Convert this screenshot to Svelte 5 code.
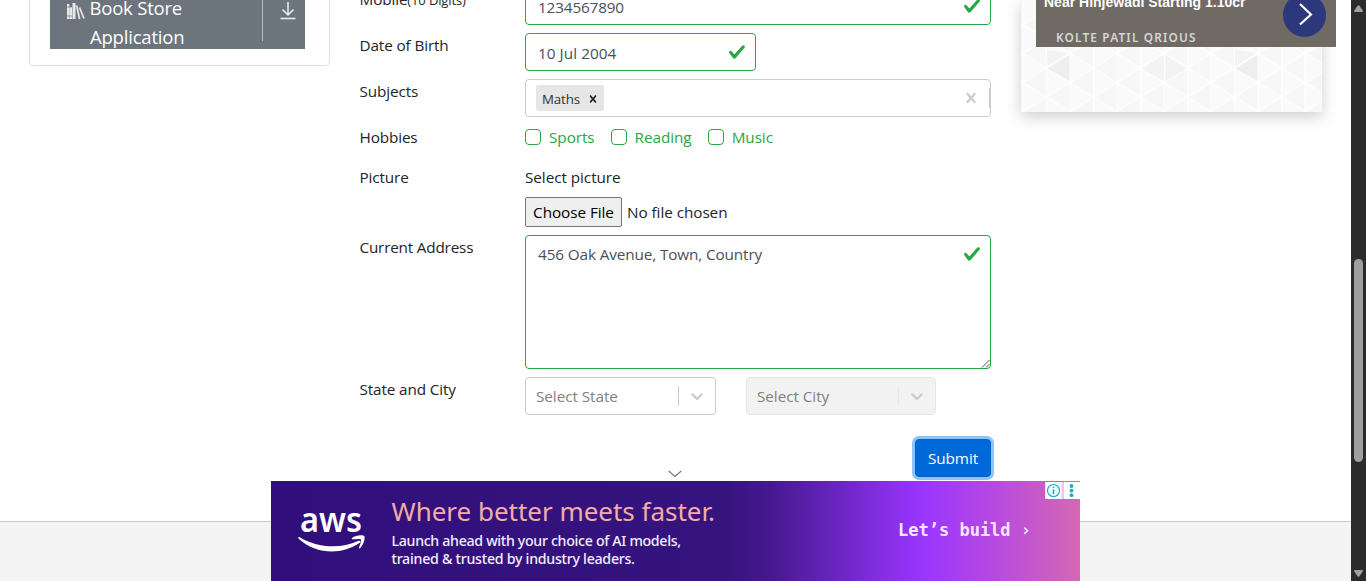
<script>
  const hobbies = ['Sports', 'Reading', 'Music'];
</script>

{#snippet check()}
  <svg class="check" viewBox="0 0 8 8" width="18" height="18"><path fill="#28a745" d="M2.3 6.73.6 4.53c-.4-1.04.46-1.4 1.1-.8l1.1 1.4 3.4-3.8c.6-.63 1.6-.27 1.2.7l-4 4.6c-.43.5-.8.4-1.1.1z" /></svg>
{/snippet}

{#snippet chevron()}
  <svg width="20" height="20" viewBox="0 0 20 20"><path fill="#ccc" d="M4.516 7.548c0.436-0.446 1.043-0.481 1.576 0l3.908 3.747 3.908-3.747c0.533-0.481 1.141-0.446 1.574 0 0.436 0.445 0.408 1.197 0 1.615-0.406 0.418-4.695 4.502-4.695 4.502-0.217 0.223-0.502 0.335-0.787 0.335s-0.57-0.112-0.789-0.335c0 0-4.287-4.084-4.695-4.502s-0.436-1.17 0-1.615z" /></svg>
{/snippet}

{#snippet cross(size, color)}
  <svg width={size} height={size} viewBox="0 0 20 20"><path fill={color} d="M14.348 14.849c-0.469 0.469-1.229 0.469-1.697 0l-2.651-3.030-2.651 3.029c-0.469 0.469-1.229 0.469-1.697 0-0.469-0.469-0.469-1.229 0-1.697l2.758-3.15-2.759-3.152c-0.469-0.469-0.469-1.228 0-1.697s1.228-0.469 1.697 0l2.652 3.031 2.651-3.031c0.469-0.469 1.228-0.469 1.697 0s0.469 1.229 0 1.697l-2.758 3.152 2.758 3.15c0.469 0.469 0.469 1.229 0 1.698z" /></svg>
{/snippet}

<div class="window">
  <div class="page">
    <main>
      <aside class="side">
        <div class="menu">
          <svg class="books" width="19" height="17" viewBox="0 0 19 17">
            <path fill="#e6e8ea" d="M1 1h2.300v15H1zM3.600 4h2.400v12H3.600zM6.500 0h3v16h-3z" />
            <path stroke="#e6e8ea" stroke-width="1.700" d="M10.600 2.500l3 13.500M13.500 4.500l4.500 11" />
            <path stroke="#6c757d" stroke-width=".7" d="M1 4h5M1 13h5" />
          </svg>
          <span class="menu-text">Book Store<br />Application</span>
          <span class="rule"></span>
          <svg class="down" width="16" height="18" viewBox="0 0 16 18"><path d="M8 0v12.500M2.500 7.500 8 13l5.500-5.500M.5 16.500h15" fill="none" stroke="#eceeef" stroke-width="1.500" /></svg>
        </div>
      </aside>

      <form>
        <div class="row"><span class="label">Mobile<small>(10 Digits)</small></span><div class="input grow"><span class="digits">1234567890</span>{@render check()}</div></div>
        <div class="row"><span class="label">Date of Birth</span><div class="input date"><span class="dob">10 Jul 2004</span>{@render check()}</div></div>
        <div class="row">
          <span class="label">Subjects</span>
          <div class="select grow">
            <span class="tag">Maths {@render cross(14, '#222')}</span>
            <span class="clear">{@render cross(20, '#ccc')}</span>
            <i class="sep"></i>
          </div>
        </div>
        <div class="row hobbies">
          <span class="label">Hobbies</span>
          {#each hobbies as hobby}
            <span class="option"><i></i><span>{hobby}</span></span>
          {/each}
        </div>
        <div class="row">
          <span class="label">Picture</span>
          <div class="file">
            <span>Select picture</span>
            <div class="chooser"><span class="choose">Choose File</span><span>No file chosen</span></div>
          </div>
        </div>
        <div class="row">
          <span class="label address">Current Address</span>
          <div class="input area grow">
            <span class="street">456 Oak Avenue, Town, Country</span>{@render check()}
            <svg class="grip" width="9" height="9" viewBox="0 0 9 9"><path d="M1 8.500 8.500 1M5 8.500 8.500 5" stroke="#555" stroke-width="1" /></svg>
          </div>
        </div>
        <div class="row">
          <span class="label">State and City</span>
          <div class="select state"><span class="ph">Select State</span><i class="sep"></i><span class="chev">{@render chevron()}</span></div>
          <div class="select city"><span class="ph">Select City</span><i class="sep"></i><span class="chev">{@render chevron()}</span></div>
        </div>
        <div class="actions"><span class="submit">Submit</span></div>
      </form>

      <aside class="promo">
        <svg class="mesh" width="301" height="112" viewBox="0 0 301 112">
          <defs>
            <pattern id="tri" width="47" height="29" patternUnits="userSpaceOnUse" x="2" y="-4.500">
              <path fill="#fafafa" d="M0 0h47v29H0z" />
              <path fill="#f7f7f7" d="M0 0 23.500 14.500V-14.500zM23.500 14.500 47 0v29zM0 29l23.500-14.500v29z" />
              <path stroke="#fff" stroke-width="1.200" fill="none" d="M0 0v29M23.500 0v29M47 0v29M0 0l47 29M47 0 0 29" />
            </pattern>
          </defs>
          <rect width="301" height="112" fill="url(#tri)" />
          <path fill="#eee" d="M26.500 68.500 48.500 55v26zM214.500 68.500 236.500 55v26z" />
          <path fill="#f3f3f3" d="M120.500 68.500 143 55v26zM144.500 55v26l21-12.500zM26 50v16l21-13zM214 50v16l21-13z" />
        </svg>
        <div class="card">
          <b>Near Hinjewadi Starting 1.10cr</b>
          <span>KOLTE PATIL QRIOUS</span>
          <div class="go"><svg width="16" height="24" viewBox="0 0 16 24"><path d="M2 2l11 10.500L2 22.500" fill="none" stroke="#fff" stroke-width="2.200" /></svg></div>
        </div>
      </aside>
    </main>
    <footer></footer>
    <svg class="collapse" width="14" height="8" viewBox="0 0 14 8"><path d="M.7 1 7 6.500 13.300 1" fill="none" stroke="#777" stroke-width="1.200" /></svg>
    <section class="banner">
      <svg class="aws" width="68" height="45" viewBox="0 0 68 45">
        <text x="2" y="25" textLength="62" lengthAdjust="spacingAndGlyphs">aws</text>
        <path fill="#fff" d="M1.300 30C18 40.500 42 42.500 60 34c2-1 3.300.5 1.800 1.800C43 49 17 47 .5 31.500c-.7-.7 0-2 .8-1.500z" />
        <path fill="#fff" d="M54 31c3-3 11-3.500 12.200-2 1.300 1.600-.2 8.500-4 12-.8.7-1.500.4-1.200-.5 1-2.500 2.600-6.800 1.800-7.900-.9-1.100-5.300-.6-7.900-.3-.9.100-1.500-.6-.9-1.300z" />
      </svg>
      <div class="copy">
        <h2>Where better meets faster.</h2>
        <p class="one">Launch ahead with your choice of AI models,</p>
        <p class="two">trained &amp; trusted by industry leaders.</p>
      </div>
      <span class="cta">Let’s build ›</span>
      <div class="choices">
        <svg width="17" height="17" viewBox="0 0 16 17"><path fill="#fff" d="M0 0h16v17H0z" /><circle cx="8" cy="8.500" r="6" fill="none" stroke="#13afc9" stroke-width="1.200" /><path stroke="#13afc9" stroke-width="1.600" d="M8 4.500v1.600M8 7.300v5" /></svg>
        <svg width="16" height="17" viewBox="0 0 16 17"><path fill="#fff" d="M0 0h16v17H0z" /><g fill="#13afc9"><circle cx="7.500" cy="4" r="1.900" /><circle cx="7.500" cy="8.600" r="1.900" /><circle cx="7.500" cy="13.200" r="1.900" /></g></svg>
      </div>
    </section>
  </div>
  <div class="scrollbar">
    <svg width="9" height="7" viewBox="0 0 9 7"><path d="M3.500.8q1-1.200 2 0L9 6q0 1-1 1H1q-1 0-1-1z" fill="#9f9f9f" /></svg>
    <i></i>
    <svg width="9" height="7" viewBox="0 0 9 7"><path d="M3.500 6.200q1 1.200 2 0L9 1q0-1-1-1H1Q0 0 0 1z" fill="#9f9f9f" /></svg>
  </div>
</div>

<style>
  :global(body) { margin: 0; overflow: hidden; }
  .window { display: flex; height: 581px; overflow: hidden; background: #fff; color: #212529; font: 15.300px/24px "Open Sans", "Noto Sans", sans-serif; letter-spacing: -.06px; white-space: nowrap; }
  .window * { box-sizing: border-box; }
  svg { display: block; flex: none; }
  .page { position: relative; width: 1351px; height: 581px; overflow: hidden; }
  main { display: flex; height: 521px; align-items: flex-start; }
  footer { height: 60px; border-top: 1px solid #cbcbcb; background: #f4f4f4; }
  .side { width: 301px; height: 66px; margin-left: 29px; padding: 0 24px 0 20px; border: 1px solid #dfdfdf; border-top: 0; border-radius: 0 0 5px 5px; }
  .menu { display: flex; height: 49px; padding-left: 16px; background: #6c757d; color: #fff; }
  .books { margin-top: 3px; }
  .menu-text { width: 172px; margin: -7px 0 0 5px; font-size: 18.500px; line-height: 29px; letter-spacing: -.2px; text-indent: -.5px; }
  .rule { width: 1px; height: 41px; background: #b5babe; }
  .down { margin: 2px 0 0 16.500px; }
  form { width: 631.500px; margin: -13px 0 0 29.500px; display: flex; flex-direction: column; gap: 8px; }
  .row { display: flex; align-items: flex-start; }
  .label { flex: none; width: 165.500px; padding-top: 1px; line-height: 23px; letter-spacing: -.13px; }
  .address { letter-spacing: -.2px; }
  small { font-size: 13px; }
  .grow { flex: 1; }
  .input { display: flex; align-items: flex-start; justify-content: space-between; height: 38px; padding: 7px 9px 0 12px; border: 1px solid #28a745; border-radius: 4px; color: #495057; }
  .digits { letter-spacing: -.15px; }
  .dob { letter-spacing: .05px; }
  .check { margin-top: 2px; }
  .date { width: 231px; }
  .area { position: relative; height: 134px; padding-top: 6px; }
  .area .check { margin-top: 3px; }
  .street { letter-spacing: -.12px; }
  .grip { position: absolute; right: 0; bottom: 0; }
  .select { display: flex; align-items: center; height: 38px; padding-left: 10px; border: 1px solid #ccc; border-radius: 4px; color: #808080; }
  .sep { width: 1px; height: 20px; background: #ccc; }
  .tag { display: flex; align-items: center; gap: 6px; width: 68px; height: 26px; padding: 1px 4px 0 6px; border-radius: 2px; background: #e6e6e6; color: #333; font-size: 13.300px; letter-spacing: -.15px; }
  .clear { margin: 0 8px 0 auto; }
  .hobbies { height: 32px; color: #28a745; }
  .hobbies .label { color: #212529; }
  .option { display: flex; gap: 8px; margin-right: 16px; }
  .option i { width: 16px; height: 16px; margin-top: 4px; border: 1px solid #28a745; border-radius: 4px; }
  .file { display: flex; flex-direction: column; gap: 8px; }
  .chooser { display: flex; align-items: center; gap: 5px; height: 30px; }
  .choose { width: 97px; height: 30px; border: 1px solid #767676; border-radius: 2px; background: #efefef; color: #000; line-height: 29px; text-align: center; }
  .state { width: 191px; }
  .city { width: 190px; margin-left: 30px; border-color: #e6e6e6; background: #f2f2f2; }
  .city .sep { background: #e6e6e6; }
  .ph { flex: 1; }
  .chev { padding: 0 8px; }
  .actions { display: flex; justify-content: flex-end; margin-top: 16px; }
  .submit { width: 76px; height: 38px; border: 1px solid #0062cc; border-radius: 4px; background: #0069d9; box-shadow: 0 0 0 3px #8fc3fb; color: #fff; line-height: 36px; text-align: center; }
  .promo { display: grid; width: 301px; height: 112px; margin-left: 30px; box-shadow: 0 5px 15px rgba(0, 0, 0, .2); }
  .mesh, .card { grid-area: 1 / 1; }
  .card { position: relative; display: flex; flex-direction: column; gap: 20px; width: 300px; height: 47px; margin-left: 15px; padding-left: 8px; background: #706a64; color: #fff; overflow: hidden; }
  .card b { margin-top: -6px; font: bold 14px/17px "Liberation Sans", sans-serif; letter-spacing: 0; }
  .card span { padding-left: 12px; font: 600 11.800px/13px "Noto Sans", sans-serif; letter-spacing: 1.180px; color: #d8d6d4; }
  .go { position: absolute; left: 247px; top: -7px; display: grid; place-items: center; width: 43px; height: 44px; padding: 0 0 2px 3px; border-radius: 50%; background: #2d387c; }
  .collapse { position: absolute; left: 667.500px; top: 470px; }
  .banner { position: absolute; left: 271px; bottom: 0; display: flex; width: 809px; height: 100px; background: linear-gradient(90deg, #300f7c 0, #36147f 456px, #47188f 500px, #6022b4 549px, #9a35fe 650px, #b548e2 720px, #d569b1 809px); color: #fff; }
  .aws { margin: 26px 0 0 27px; }
  .aws text { font: 600 35px "Noto Sans", sans-serif; fill: #fff; letter-spacing: 0; }
  .copy { width: 500px; margin: 13px 0 0 25.500px; }
  h2 { margin: 0; font: 400 26px/34px "Noto Sans", sans-serif; letter-spacing: -.02px; color: #f5aca4; }
  p { margin: 0; font: 500 14.200px/18px "Noto Sans", sans-serif; letter-spacing: -.32px; color: #f3ecff; }
  .one { margin-top: 4px; }
  .two { letter-spacing: -.27px; }
  .cta { width: 147px; margin: 37px 0 0 6.500px; font: bold 17px/24px "DejaVu Sans Mono", monospace; letter-spacing: 0; color: #fce4ff; }
  .choices { position: absolute; top: 1px; right: 0; display: flex; gap: 2px; background: #efc5e7; }
  .scrollbar { display: flex; flex-direction: column; align-items: center; width: 15px; height: 581px; padding: 5px 0 4px; background: #2b2b2b; }
  .scrollbar i { width: 9px; height: 203px; margin: 247px 0 auto; border-radius: 5px; background: #9f9f9f; }
</style>
